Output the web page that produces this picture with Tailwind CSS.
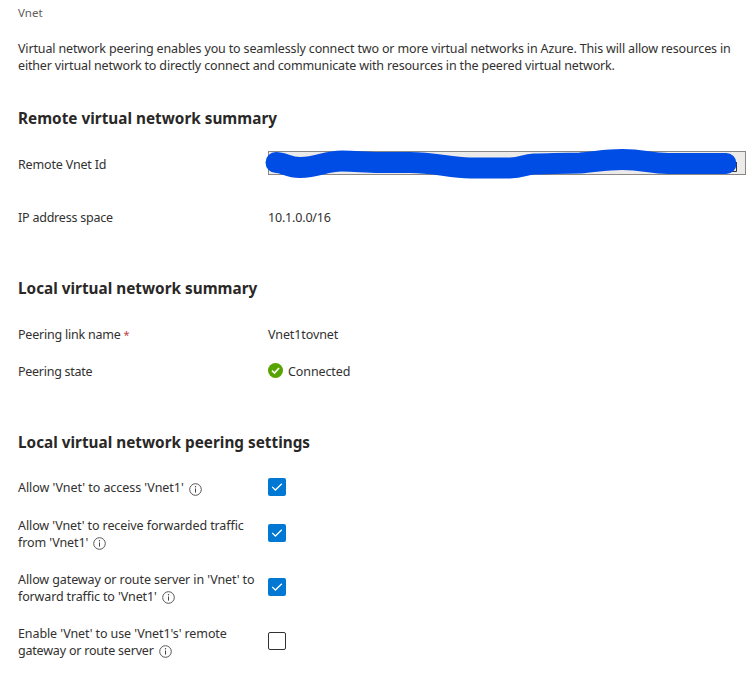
<!DOCTYPE html>
<html lang="en">
<head>
<meta charset="utf-8">
<title>Vnet peering</title>
<script src="https://cdn.jsdelivr.net/npm/@tailwindcss/browser@4"></script>
</head>
<body class="h-[697px] w-[756px] overflow-hidden bg-white font-['Noto_Sans',sans-serif] text-[12.5px] leading-[17px] tracking-[-0.1px] text-[#323130]">
<svg class="hidden" aria-hidden="true">
  <symbol id="info" viewBox="0 0 13 13"><circle cx="6.5" cy="6.5" r="5.8" fill="none" stroke="#555" stroke-width="1"/><path d="M6.500 5.500V9.600" stroke="#444" stroke-width="1"/><circle cx="6.5" cy="3.800" r=".7" fill="#444"/></symbol>
  <symbol id="check" viewBox="0 0 18 18"><path d="M4.200 8.900 7.400 12 13.800 5.700" fill="none" stroke="#fff" stroke-width="1.300"/></symbol>
</svg>
<main class="flex flex-col pl-[18px] whitespace-nowrap">
  <div class="mt-[5px] text-[11.5px] leading-4 tracking-normal text-[#605e5c]">Vnet</div>
  <p class="mt-[19px] tracking-[-0.15px]">Virtual network peering enables you to seamlessly connect two or more virtual networks in Azure. This will allow resources in<br><span class="tracking-[-0.16px]">either virtual network to directly connect and communicate with resources in the peered virtual network.</span></p>

  <h2 class="mt-[34px] text-[15.3px] leading-5 font-bold tracking-[0.01px] text-[#292827]">Remote virtual network summary</h2>
  <div class="mt-[23px] flex h-6 items-center">
    <div class="w-[250px] pt-[2px] tracking-[-0.17px]">Remote Vnet Id</div>
    <div class="relative h-6 w-[478px] border border-[#8a8886] bg-[#edebe9]">
      <svg class="absolute -top-[12px] -left-[9px] h-[50px] w-[488px]" viewBox="260 140 488 50">
        <path d="M730 171.500H736.500V162" fill="none" stroke="#323130"/>
        <path d="M276 162.500C284 162.500 288 167.500 300 167.500C319 167.500 324 161 342 161C356 161 365 162.500 380 162.500H410C435 162.500 450 168 470 168H510C522 168 524 164.500 534 164C550 164 560 163 580 163C595 162 605 159.500 622 159.500C644 159.500 650 163.500 668 163.500H726" fill="none" stroke="#004de6" stroke-width="21" stroke-linecap="round" stroke-linejoin="round"/>
      </svg>
    </div>
  </div>
  <div class="mt-[34px] flex"><div class="w-[250px] tracking-[-0.22px]">IP address space</div><span class="tracking-[-0.18px]">10.1.0.0/16</span></div>

  <h2 class="mt-[52px] text-[15.3px] leading-5 font-bold tracking-[0.01px] text-[#292827]">Local virtual network summary</h2>
  <div class="mt-[28px] flex"><div class="w-[250px] tracking-[-0.22px]">Peering link name <span class="text-[11px] text-[#c0404a]">*</span></div><span>Vnet1tovnet</span></div>
  <div class="mt-[20px] flex">
    <div class="w-[250px] tracking-[-0.27px]">Peering state</div>
    <svg class="mr-[5px] size-[15px]" viewBox="0 0 15 15"><circle cx="7.500" cy="7.500" r="7.500" fill="#57a300"/><path d="M4 7.700 6.500 10.100 11 5" fill="none" stroke="#fff" stroke-width="1.700"/></svg>
    <span>Connected</span>
  </div>

  <h2 class="mt-[52px] text-[15.3px] leading-5 font-bold tracking-[0.01px] text-[#292827]">Local virtual network peering settings</h2>
  <div class="mt-[25px] flex h-[20px] items-center">
    <div class="w-[250px] tracking-[-0.05px]">Allow 'Vnet' to access 'Vnet1'<svg class="ml-[5px] inline size-[13px] align-[-4px]"><use href="#info"/></svg></div>
    <svg class="size-[18px] rounded-[2px] bg-[#0078d4]"><use href="#check"/></svg>
  </div>
  <div class="mt-[19px] flex h-[34px] items-center">
    <div class="w-[250px] pt-[2px]">Allow 'Vnet' to receive forwarded traffic<br>from 'Vnet1'<svg class="ml-[5px] inline size-[13px] align-[-3px]"><use href="#info"/></svg></div>
    <svg class="size-[18px] rounded-[2px] bg-[#0078d4]"><use href="#check"/></svg>
  </div>
  <div class="mt-[20px] flex h-[34px] items-center">
    <div class="w-[250px] pt-[2px]">Allow gateway or route server in 'Vnet' to<br><span class="tracking-[-0.14px]">forward traffic to 'Vnet1'</span><svg class="ml-[5px] inline size-[13px] align-[-3px]"><use href="#info"/></svg></div>
    <svg class="size-[18px] rounded-[2px] bg-[#0078d4]"><use href="#check"/></svg>
  </div>
  <div class="mt-[20px] flex h-[34px] items-center">
    <div class="w-[250px] pt-[2px]">Enable 'Vnet' to use 'Vnet1's' remote<br><span class="tracking-[-0.2px]">gateway or route server</span><svg class="ml-[5px] inline size-[13px] align-[-3px]"><use href="#info"/></svg></div>
    <div class="size-[18px] rounded-[2px] border border-[#323130]"></div>
  </div>
</main>
</body>
</html>
